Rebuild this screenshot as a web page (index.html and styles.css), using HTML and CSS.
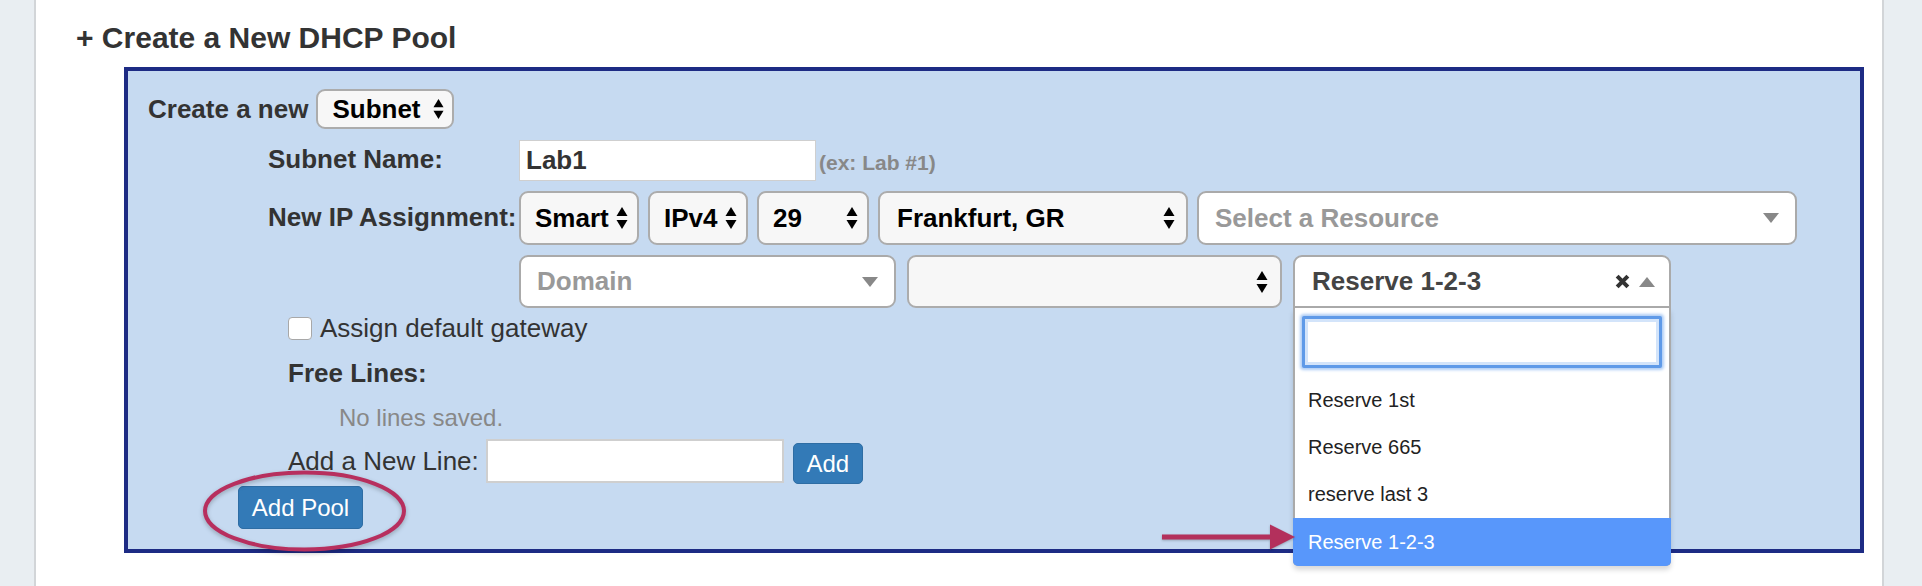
FILE: index.html
```html
<!DOCTYPE html>
<html>
<head>
<meta charset="utf-8">
<title>Create a New DHCP Pool</title>
<link rel="stylesheet" href="styles.css">
</head>
<body>
<div class="page">
  <aside class="strip strip-left"></aside>
  <main class="content">
    <h2 class="title">+ Create a New DHCP Pool</h2>
    <section class="pool-box">
      <div class="row-create">
        <span class="lbl">Create a new</span>
        <div class="nsel w-subnet"><span>Subnet</span><svg class="ud" viewBox="0 0 12 24"><polygon points="6,1 11.5,10 0.5,10"/><polygon points="0.5,14 11.5,14 6,23"/></svg></div>
      </div>

      <div class="form-grid">
        <div class="flabel">Subnet Name:</div>
        <div class="fctrl">
          <div class="text-input">Lab1</div>
          <span class="hint">(ex: Lab #1)</span>
        </div>

        <div class="flabel">New IP Assignment:</div>
        <div class="fctrl sel-row">
          <div class="nsel w-smart"><span>Smart</span><svg class="ud" viewBox="0 0 12 24"><polygon points="6,1 11.5,10 0.5,10"/><polygon points="0.5,14 11.5,14 6,23"/></svg></div>
          <div class="nsel w-ipv"><span>IPv4</span><svg class="ud" viewBox="0 0 12 24"><polygon points="6,1 11.5,10 0.5,10"/><polygon points="0.5,14 11.5,14 6,23"/></svg></div>
          <div class="nsel w-29"><span>29</span><svg class="ud" viewBox="0 0 12 24"><polygon points="6,1 11.5,10 0.5,10"/><polygon points="0.5,14 11.5,14 6,23"/></svg></div>
          <div class="nsel w-city"><span>Frankfurt, GR</span><svg class="ud" viewBox="0 0 12 24"><polygon points="6,1 11.5,10 0.5,10"/><polygon points="0.5,14 11.5,14 6,23"/></svg></div>
          <div class="s2 w-res"><span class="ph">Select a Resource</span><svg class="dn" viewBox="0 0 16 10"><polygon points="0,0 16,0 8,10"/></svg></div>
        </div>

        <div class="flabel"></div>
        <div class="fctrl sel-row2">
          <div class="s2 w-dom"><span class="ph">Domain</span><svg class="dn" viewBox="0 0 16 10"><polygon points="0,0 16,0 8,10"/></svg></div>
          <div class="nsel blank w-blank"><span></span><svg class="ud" viewBox="0 0 12 24"><polygon points="6,1 11.5,10 0.5,10"/><polygon points="0.5,14 11.5,14 6,23"/></svg></div>
          <div class="s2-wrap">
            <div class="s2 open w-rsv"><span class="val">Reserve 1-2-3</span><svg class="clr" viewBox="0 0 14 14"><path d="M2 2 L12 12 M12 2 L2 12"/></svg><svg class="up" viewBox="0 0 16 10"><polygon points="0,10 16,10 8,0"/></svg></div>
            <div class="drop">
              <div class="search"></div>
              <ul class="opts">
                <li>Reserve 1st</li>
                <li>Reserve 665</li>
                <li>reserve last 3</li>
                <li class="hl">Reserve 1-2-3</li>
              </ul>
            </div>
          </div>
        </div>
      </div>

      <div class="extras">
        <div class="check-row"><span class="cbox"></span><span>Assign default gateway</span></div>
        <div class="free">Free Lines:</div>
        <div class="none">No lines saved.</div>
        <div class="add-row">
          <span>Add a New Line:</span>
          <div class="line-input"></div>
          <button class="btn btn-add">Add</button>
        </div>
      </div>
      <button class="btn btn-pool">Add Pool</button>

      <svg class="ring" viewBox="0 0 209 84"><ellipse cx="104.5" cy="42" rx="99.5" ry="38.5"/></svg>
      <svg class="arrow" viewBox="0 0 133 26"><rect x="0" y="10.5" width="110" height="5"/><polygon points="108,0.5 133,13 108,25.5"/></svg>
    </section>
  </main>
  <aside class="strip strip-right"></aside>
</div>
</body>
</html>
```

FILE: styles.css
```css
* { box-sizing: border-box; }
html, body { margin: 0; padding: 0; }
body {
  font-family: "Liberation Sans", Arial, Helvetica, sans-serif;
  color: #333;
  background: #fff;
  width: 1922px;
  height: 586px;
  overflow: hidden;
}
.page { display: flex; height: 586px; }
.strip { background: #e9eef2; flex: none; }
.strip-left { width: 36px; border-right: 2px solid #d2d5d8; }
.strip-right { width: 40px; border-left: 2px solid #d2d5d8; }
.content { flex: 1; padding: 21px 0 0 40px; }

.title {
  margin: 0;
  font-size: 30px;
  line-height: 34px;
  font-weight: bold;
  color: #333;
}

.pool-box {
  position: relative;
  margin: 12px 0 0 48px;
  width: 1740px;
  border: 4px solid #1d2b84;
  background: #c6daf1;
  padding: 18px 0 20px 20px;
}

.row-create { display: flex; align-items: center; gap: 8px; height: 40px; }
.lbl { font-size: 26px; font-weight: bold; }

.nsel {
  display: flex;
  align-items: center;
  justify-content: space-between;
  background: #f7f7f7;
  border: 2px solid #acacac;
  border-radius: 9px;
  padding: 0 9px 0 14px;
  font-size: 26px;
  font-weight: bold;
  color: #000;
  height: 100%;
}
.ud { width: 12px; height: 24px; fill: #000; flex: none; }
.w-subnet { width: 138px; height: 40px; padding-left: 14px; padding-right: 8px; }
.w-subnet .ud { width: 11px; height: 22px; }
.w-smart { width: 120px; }
.w-ipv { width: 100px; }
.w-29 { width: 112px; }
.w-city { width: 310px; padding-left: 17px; padding-right: 11px; }
.blank { width: 375px; padding-right: 12px; }

.form-grid {
  margin: 11px 0 0 120px;
  display: grid;
  grid-template-columns: 251px auto;
  grid-template-rows: 41px 54px 53px;
  row-gap: 10px;
}
.flabel {
  font-size: 26px;
  font-weight: bold;
  white-space: nowrap;
  display: flex;
  align-items: center;
  padding-bottom: 2px;
}
.fctrl { display: flex; align-items: center; }
.text-input {
  width: 297px;
  height: 41px;
  background: #fff;
  border: 1px solid #cfcfcf;
  padding-left: 6px;
  font-size: 26px;
  font-weight: bold;
  line-height: 39px;
  color: #333;
}
.hint { margin: 4px 0 0 3px; font-size: 21px; font-weight: bold; color: #888; }

.sel-row { gap: 9px; align-items: stretch; }
.sel-row2 { gap: 11px; align-items: stretch; }

.s2 {
  display: flex;
  align-items: center;
  background: #fff;
  border: 2px solid #aaa;
  border-radius: 9px;
  padding: 0 16px 0 16px;
  font-size: 26px;
  font-weight: bold;
  height: 100%;
}
.s2 .ph { color: #999; flex: 1; }
.dn, .up { width: 16px; height: 10px; fill: #888; flex: none; }
.w-res { width: 600px; }
.w-dom { width: 377px; }

.s2-wrap { position: relative; width: 378px; }
.w-rsv { width: 378px; }
.s2.open { border-radius: 9px 9px 0 0; padding: 0 14px 0 17px; }
.s2 .val { flex: 1; color: #444; }
.clr { width: 15px; height: 15px; stroke: #333; stroke-width: 3.8; fill: none; margin-right: 9px; flex: none; }

.drop {
  position: absolute;
  left: 0;
  top: 100%;
  width: 378px;
  background: #fff;
  border: 2px solid #aaa;
  border-top: none;
  border-radius: 0 0 5px 5px;
  box-shadow: 0 4px 5px rgba(0, 0, 0, 0.15);
  padding-top: 8px;
  z-index: 2;
}
.search {
  margin: 0 7px 9px 7px;
  height: 52px;
  border: 3px solid #5f9ae8;
  background: #fff;
  box-shadow: 0 0 3px 2px #aecdf5, inset 0 0 0 3px #d3e4fa;
  border-radius: 2px;
}
.opts { list-style: none; margin: 0; padding: 0; }
.opts li {
  height: 47px;
  line-height: 47px;
  padding-left: 13px;
  font-size: 20px;
  color: #222;
}
.opts li.hl { background: #5897fb; color: #fff; height: 48px; line-height: 48px; margin: 0 -2px -2px; padding-left: 15px; border-radius: 0 0 5px 5px; }

.extras { padding-left: 140px; }
.check-row {
  margin-top: 8px;
  height: 24px;
  display: flex;
  align-items: center;
  gap: 8px;
  font-size: 26px;
}
.cbox {
  width: 24px;
  height: 23px;
  background: #fff;
  border: 1px solid #a8a8a8;
  border-radius: 4px;
}
.free { margin-top: 18px; line-height: 30px; font-size: 26px; font-weight: bold; }
.none { margin-top: 15px; line-height: 30px; padding-left: 51px; font-size: 24px; color: #888; }
.add-row { margin-top: 6px; height: 44px; display: flex; align-items: center; font-size: 26px; }
.line-input {
  margin-left: 7px;
  width: 298px;
  height: 44px;
  background: #fff;
  border: 2px solid #cfcfcf;
}
.btn {
  font-family: "Liberation Sans", Arial, Helvetica, sans-serif;
  background: #337ab7;
  border: 1px solid #2e6da4;
  border-radius: 5px;
  color: #fff;
  font-size: 24px;
  padding: 0;
  display: block;
}
.btn-add { margin: 5px 0 0 9px; width: 70px; height: 41px; }
.btn-pool { margin: 3px 0 0 90px; width: 125px; height: 43px; }

.ring {
  position: absolute;
  left: 72px;
  top: 398px;
  width: 209px;
  height: 84px;
  fill: none;
  stroke: #b72f5e;
  stroke-width: 4;
  overflow: visible;
  filter: drop-shadow(0 2px 2px rgba(0, 0, 0, 0.25));
}
.arrow {
  position: absolute;
  left: 1034px;
  top: 453px;
  width: 133px;
  height: 26px;
  fill: #b3305c;
  z-index: 3;
  filter: drop-shadow(0 1px 1px rgba(0, 0, 0, 0.25));
}
```
